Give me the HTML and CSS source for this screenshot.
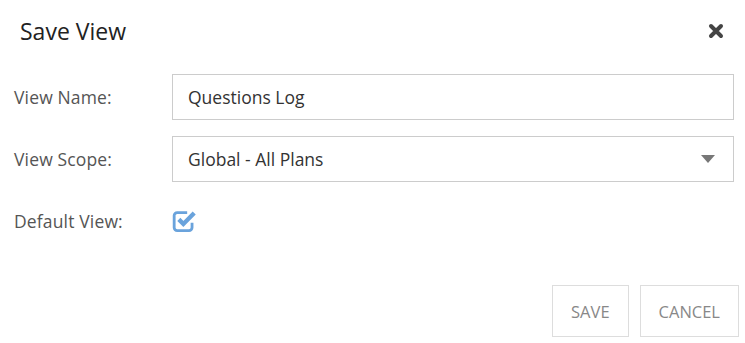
FILE: index.html
```html
<!DOCTYPE html>
<html>
<head>
<meta charset="utf-8">
<link rel="stylesheet" href="styles.css">
</head>
<body>
<div class="dialog">
  <div class="header">
    <h1 class="title">Save View</h1>
    <button class="close" aria-label="Close">
      <svg width="16" height="16" viewBox="0 0 16 16"><path d="M3 3 L13 13 M13 3 L3 13" stroke="#444" stroke-width="4" stroke-linecap="round"/></svg>
    </button>
  </div>
  <div class="form">
    <label class="label">View Name:</label>
    <div class="field">Questions Log</div>
    <label class="label">View Scope:</label>
    <div class="field select">
      <span>Global - All Plans</span>
      <span class="caret"></span>
    </div>
    <label class="label">Default View:</label>
    <div class="check">
      <svg width="26" height="26" viewBox="0 0 24 24"><path d="M18.5 13.5 V18 a2.8 2.8 0 0 1 -2.8 2.8 H4.8 a2.8 2.8 0 0 1 -2.8 -2.8 V7 a2.8 2.8 0 0 1 2.8 -2.8 H14" fill="none" stroke="#6aa3dc" stroke-width="2.6"/><path d="M6.3 10.5 L10.5 14.7 L20.5 4.7" fill="none" stroke="#6aa3dc" stroke-width="4"/></svg>
    </div>
  </div>
  <div class="actions">
    <button class="btn">SAVE</button>
    <button class="btn">CANCEL</button>
  </div>
</div>
</body>
</html>
```
FILE: styles.css
```css
html, body {
  margin: 0;
  background: #fff;
}
body {
  font-family: "Open Sans", "Noto Sans", sans-serif;
  color: #333;
}
.dialog {
  width: 745px;
  height: 343px;
}
.header {
  display: flex;
  align-items: center;
  justify-content: space-between;
  height: 62px;
  padding: 0 21px 0 20px;
}
.title {
  margin: 0;
  font-size: 23px;
  font-weight: 400;
  color: #222;
}
.close {
  border: 0;
  background: none;
  padding: 0;
  display: flex;
}
.form {
  display: grid;
  grid-template-columns: 158px 1fr;
  grid-auto-rows: 46px;
  row-gap: 16px;
  padding: 12px 11px 0 14px;
}
.label {
  display: flex;
  align-items: center;
  font-size: 17.5px;
  letter-spacing: 0.15px;
  color: #555;
}
.field {
  border: 1px solid #ccc;
  display: flex;
  align-items: center;
  padding: 0 18px 0 15px;
  font-size: 17.5px;
  color: #333;
}
.select {
  justify-content: space-between;
}
.caret {
  width: 0;
  height: 0;
  border-left: 7px solid transparent;
  border-right: 7px solid transparent;
  border-top: 8px solid #777;
}
.check {
  display: flex;
  align-items: center;
  padding-left: 0;
}
.actions {
  display: flex;
  justify-content: flex-end;
  gap: 11px;
  padding: 41px 6px 0 0;
}
.btn {
  height: 52px;
  border: 1px solid #ddd;
  background: #fff;
  color: #888;
  font-family: "Open Sans", "Noto Sans", sans-serif;
  font-size: 16.5px;
  padding: 0 18px;
}
```
